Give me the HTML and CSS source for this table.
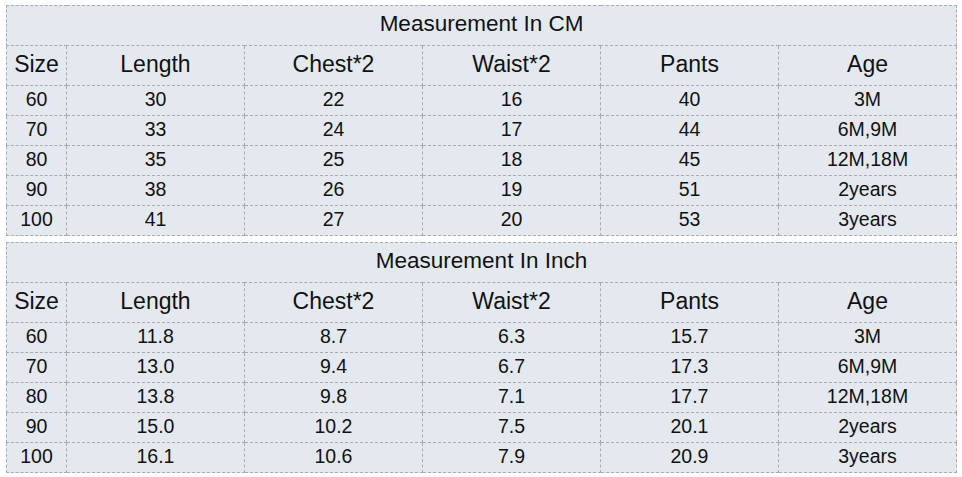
FILE: index.html
```html
<!DOCTYPE html>
<html>
<head>
<meta charset="utf-8">
<link rel="stylesheet" href="styles.css">
</head>
<body>
<div class="page">
  <table class="size-table">
    <colgroup>
      <col class="c-size"><col class="c-col"><col class="c-col"><col class="c-col"><col class="c-col"><col class="c-col">
    </colgroup>
    <tr class="title-row"><td colspan="6">Measurement In CM</td></tr>
    <tr class="head-row"><td>Size</td><td>Length</td><td>Chest*2</td><td>Waist*2</td><td>Pants</td><td>Age</td></tr>
    <tr class="data-row"><td>60</td><td>30</td><td>22</td><td>16</td><td>40</td><td>3M</td></tr>
    <tr class="data-row"><td>70</td><td>33</td><td>24</td><td>17</td><td>44</td><td>6M,9M</td></tr>
    <tr class="data-row"><td>80</td><td>35</td><td>25</td><td>18</td><td>45</td><td>12M,18M</td></tr>
    <tr class="data-row"><td>90</td><td>38</td><td>26</td><td>19</td><td>51</td><td>2years</td></tr>
    <tr class="data-row"><td>100</td><td>41</td><td>27</td><td>20</td><td>53</td><td>3years</td></tr>
  </table>
  <table class="size-table">
    <colgroup>
      <col class="c-size"><col class="c-col"><col class="c-col"><col class="c-col"><col class="c-col"><col class="c-col">
    </colgroup>
    <tr class="title-row"><td colspan="6">Measurement In Inch</td></tr>
    <tr class="head-row"><td>Size</td><td>Length</td><td>Chest*2</td><td>Waist*2</td><td>Pants</td><td>Age</td></tr>
    <tr class="data-row"><td>60</td><td>11.8</td><td>8.7</td><td>6.3</td><td>15.7</td><td>3M</td></tr>
    <tr class="data-row"><td>70</td><td>13.0</td><td>9.4</td><td>6.7</td><td>17.3</td><td>6M,9M</td></tr>
    <tr class="data-row"><td>80</td><td>13.8</td><td>9.8</td><td>7.1</td><td>17.7</td><td>12M,18M</td></tr>
    <tr class="data-row"><td>90</td><td>15.0</td><td>10.2</td><td>7.5</td><td>20.1</td><td>2years</td></tr>
    <tr class="data-row"><td>100</td><td>16.1</td><td>10.6</td><td>7.9</td><td>20.9</td><td>3years</td></tr>
  </table>
</div>
</body>
</html>
```
FILE: styles.css
```css
html, body {
  margin: 0;
  padding: 0;
  background: #ffffff;
}
.page {
  padding: 5px 0 0 6px;
  display: flex;
  flex-direction: column;
  gap: 6px;
}
.size-table {
  border-collapse: collapse;
  table-layout: fixed;
  width: 951px;
  background: #e4e9f0;
  font-family: "Liberation Sans", Arial, sans-serif;
  color: #111;
}
.c-size { width: 60px; }
.c-col { width: 178px; }
.size-table td {
  border: 1px dashed #a8abb0;
  padding: 0;
  text-align: center;
  vertical-align: middle;
  white-space: nowrap;
  line-height: 1;
}
.title-row td {
  height: 36px;
  padding-bottom: 3px;
  font-size: 22.5px;
}
.head-row td {
  height: 36px;
  padding-bottom: 3px;
  font-size: 23px;
}
.data-row td {
  height: 27px;
  padding-bottom: 2px;
  font-size: 19.5px;
}
```
